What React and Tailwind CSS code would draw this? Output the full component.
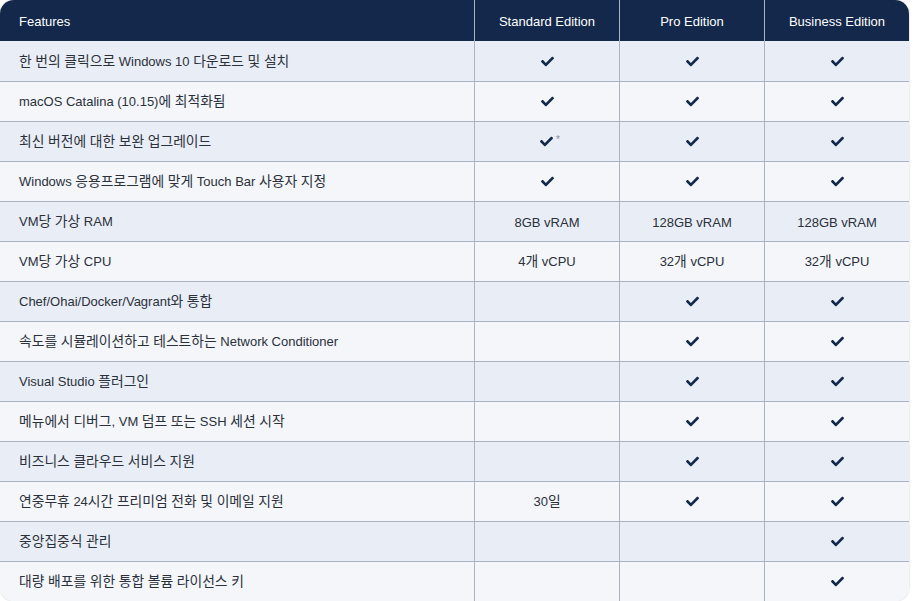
import React from "react";
import { FaCheck } from "react-icons/fa";

const C = "check";
const rows = [
  ["한 번의 클릭으로 Windows 10 다운로드 및 설치", C, C, C],
  ["macOS Catalina (10.15)에 최적화됨", C, C, C],
  ["최신 버전에 대한 보완 업그레이드", "check*", C, C],
  ["Windows 응용프로그램에 맞게 Touch Bar 사용자 지정", C, C, C],
  ["VM당 가상 RAM", "8GB vRAM", "128GB vRAM", "128GB vRAM"],
  ["VM당 가상 CPU", "4개 vCPU", "32개 vCPU", "32개 vCPU"],
  ["Chef/Ohai/Docker/Vagrant와 통합", "", C, C],
  ["속도를 시뮬레이션하고 테스트하는 Network Conditioner", "", C, C],
  ["Visual Studio 플러그인", "", C, C],
  ["메뉴에서 디버그, VM 덤프 또는 SSH 세션 시작", "", C, C],
  ["비즈니스 클라우드 서비스 지원", "", C, C],
  ["연중무휴 24시간 프리미엄 전화 및 이메일 지원", "30일", C, C],
  ["중앙집중식 관리", "", "", C],
  ["대량 배포를 위한 통합 볼륨 라이선스 키", "", "", C],
];

function Txt({ s }) {
  const parts = s.split(/([\uAC00-\uD7A3]+)/);
  return (
    <span className="pt-[2px]">
      {parts.map((p, i) =>
        /[\uAC00-\uD7A3]/.test(p) ? (
          <span key={i} className="text-[13.8px]">{p}</span>
        ) : (
          <span key={i}>{p}</span>
        )
      )}
    </span>
  );
}

function Cell({ v }) {
  if (v === "check")
    return <FaCheck className="text-[#13284a]" size={13} />;
  if (v === "check*")
    return (
      <span className="flex items-center pl-[6px]">
        <FaCheck className="text-[#13284a]" size={13} />
        <span className="ml-[3px] text-[10px] text-[#8a8f98] leading-none -mt-[4px]">*</span>
      </span>
    );
  return <Txt s={v} />;
}

export default function App() {
  return (
    <div className="w-[913px] h-[601px] bg-white overflow-hidden">
      <div
        className="w-[909px] rounded-[14px] overflow-hidden shadow-[0_0_2px_rgba(0,0,0,0.25)] text-[13px] text-[#2b313b]"
        style={{ fontFamily: '"Liberation Sans", "Noto Sans CJK KR", Arial, sans-serif' }}
      >
        <div className="grid grid-cols-[474px_145px_145px_145px] h-[41px] bg-[#13284a] text-white">
          <div className="flex items-center pl-[19px] pt-[2px]">Features</div>
          <div className="flex items-center justify-center border-l border-[#a9b3c1] pt-[2px]">Standard Edition</div>
          <div className="flex items-center justify-center border-l border-[#a9b3c1] pt-[2px]">Pro Edition</div>
          <div className="flex items-center justify-center border-l border-[#a9b3c1] pt-[2px]">Business Edition</div>
        </div>
        {rows.map((r, i) => (
          <div
            key={i}
            className={
              "grid grid-cols-[474px_145px_145px_145px] h-[40px] " +
              (i > 0 ? "border-t border-[#a9b3c1] " : "") +
              (i % 2 === 0 ? "bg-[#e9edf5]" : "bg-[#f4f6fa]")
            }
          >
            <div className="flex items-center pl-[19px]">
              <Txt s={r[0]} />
            </div>
            {r.slice(1).map((v, j) => (
              <div key={j} className="flex items-center justify-center border-l border-[#a9b3c1]">
                <Cell v={v} />
              </div>
            ))}
          </div>
        ))}
      </div>
    </div>
  );
}
